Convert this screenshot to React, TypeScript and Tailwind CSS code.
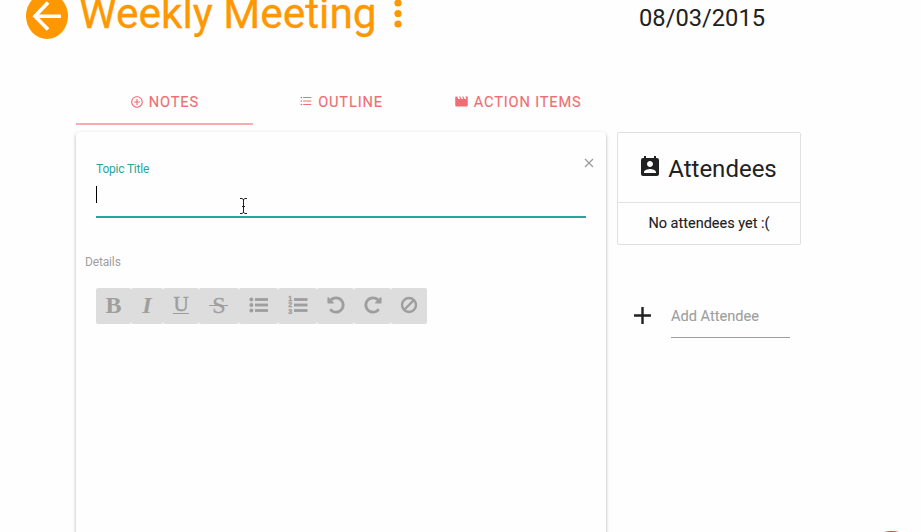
import React from "react";
import {
  MdAdd,
  MdControlPoint,
  MdFormatListBulleted,
  MdMovie,
  MdPermContactCalendar,
} from "react-icons/md";

const UNDO =
  "M1664 896q0 156-61 298t-164 245-245 164-298 61q-172 0-327-72.5t-264-204.5q-7-10-6.5-22.5t8.5-20.5l137-138q10-9 25-9 16 2 23 12 73 95 179 147t225 52q104 0 198.5-40.5t163.5-109.5 109.5-163.5 40.5-198.5-40.5-198.5-109.5-163.5-163.5-109.5-198.5-40.5q-98 0-188 35.5t-160 101.5l137 138q31 30 14 69-17 40-59 40h-448q-26 0-45-19t-19-45v-448q0-42 40-59 39-17 69 14l130 129q107-101 244.5-156.5t284.5-55.5q156 0 298 61t245 164 164 245 61 298z";

function Rotate({ flip = false }: { flip?: boolean }) {
  return (
    <svg viewBox="0 0 1792 1792" className={flip ? "size-5 -scale-x-100" : "size-5"} fill="currentColor">
      <path d={UNDO} />
    </svg>
  );
}

function BulletList() {
  return (
    <svg width="20" height="16" viewBox="0 0 20 16" fill="currentColor">
      {[2.5, 8, 13.5].map((y) => (
        <g key={y}>
          <circle cx="2.4" cy={y} r="2" />
          <rect x="6" y={y - 1.4} width="13" height="2.8" />
        </g>
      ))}
    </svg>
  );
}

function NumberList() {
  return (
    <svg width="20" height="20" viewBox="0 0 20 20" fill="currentColor" className="overflow-visible">
      {[4.5, 10, 15.5].map((y, i) => (
        <g key={y}>
          <text x="0.3" y={[5.8, 12.4, 19][i]} fontSize="7" fontWeight="700" stroke="currentColor" strokeWidth="0.3" fontFamily="Liberation Sans, sans-serif">
            {i + 1}
          </text>
          <rect x="6" y={y - 1.4} width="13.5" height="2.8" />
        </g>
      ))}
    </svg>
  );
}

function Ban() {
  return (
    <svg width="18" height="18" viewBox="0 0 18 18" fill="none" stroke="currentColor" strokeWidth="2.4">
      <circle cx="9" cy="9" r="7" />
      <path d="M4 14 14 4" />
    </svg>
  );
}

const letter = "font-['Liberation_Serif',serif] text-[24px] leading-none";

const tools = [
  { id: "bold", width: "w-[35px]", icon: <span className={letter + " font-bold"}>B</span> },
  { id: "italic", width: "w-[32px]", icon: <span className={letter + " font-bold italic"}>I</span> },
  {
    id: "underline",
    width: "w-[36px]",
    icon: <span className="h-[18px] w-4 border-b border-current text-center font-['Liberation_Serif',serif] text-[21px] leading-[17px] [-webkit-text-stroke:0.5px]">U</span>,
  },
  {
    id: "strike",
    width: "w-[40px]",
    icon: (
      <span className="relative font-['Liberation_Serif',serif] text-[24px] leading-none [-webkit-text-stroke:0.3px]">
        S<span className="absolute top-[12px] -left-[3px] h-px w-[19px] bg-current" />
      </span>
    ),
  },
  { id: "bullets", width: "w-[39px]", icon: <BulletList /> },
  { id: "numbers", width: "w-[39px]", icon: <NumberList /> },
  { id: "undo", width: "w-[37px]", icon: <Rotate /> },
  { id: "redo", width: "w-[37px]", icon: <Rotate flip /> },
  { id: "clear", width: "w-[36px]", icon: <Ban /> },
];

const tabs = [
  { label: "NOTES", icon: <MdControlPoint className="mb-px size-[14px]" />, active: true },
  { label: "OUTLINE", icon: <MdFormatListBulleted className="mb-[2px] size-[14px]" />, active: false },
  { label: "ACTION ITEMS", icon: <MdMovie className="mb-[2px] size-[15px]" />, active: false },
];

function Header() {
  return (
    <header className="flex h-[84px] items-start pl-[26px]">
      <svg width="42" height="40" viewBox="0 0 42 40" className="shrink-0">
        <ellipse cx="21" cy="16" rx="21" ry="23" fill="#ff9800" />
        <path d="M35 16.2H9.5M22 2.5 9 16.2 22 29.5" fill="none" stroke="#fff" strokeWidth="3.6" />
      </svg>
      <h1 className="-mt-[12px] ml-[11px] w-[315px] text-[42.4px] leading-[51px] whitespace-nowrap text-[#ff9800] [-webkit-text-stroke:0.3px]">
        Weekly Meeting
      </h1>
      <svg width="8" height="30" viewBox="0 0 8 30" fill="#ff9800" className="shrink-0">
        <circle cx="4" cy="3" r="3.6" />
        <circle cx="4" cy="13.5" r="3.6" />
        <circle cx="4" cy="24" r="3.6" />
      </svg>
      <time className="mt-[3px] ml-[237px] text-[23.7px] leading-[31px]">08/03/2015</time>
    </header>
  );
}

export default function App() {
  return (
    <div className="relative h-[532px] w-[921px] overflow-hidden bg-[#fefefe] font-['Roboto',sans-serif] text-[#212121]">
      <Header />
      <div className="flex items-start pl-[76px]">
        <main className="w-[530px]">
          <nav className="flex h-[41px] text-[#ee6e73]">
            {tabs.map((t) => (
              <div
                key={t.label}
                className={
                  "flex w-[177px] items-center justify-center gap-[5px] border-b-2 pb-[3px] text-[14.6px] tracking-[0.85px] [-webkit-text-stroke:0.15px] " +
                  (t.active ? "border-[#f9abaf]" : "border-transparent")
                }
              >
                {t.icon}
                <span className="pt-px">{t.label}</span>
              </div>
            ))}
          </nav>
          <section className="mt-[7px] h-[450px] rounded-sm shadow-[0_2px_3px_0_rgba(0,0,0,0.2),0_1px_4px_0_rgba(0,0,0,0.14)]">
            <div className="flex justify-between pt-[24px] pr-[12px] pl-5">
              <div className="pt-[5px] text-[12px] leading-4 tracking-[-0.2px] text-[#26a69a]">Topic Title</div>
              <svg width="11" height="15" viewBox="0 0 11 15" stroke="#999" strokeWidth="1.2">
                <path d="m2 3 8 8m0-8-8 8" />
              </svg>
            </div>
            <div className="mx-5 flex h-[41px] items-start border-b-2 border-[#26a69a] pt-[8px]">
              <span className="mt-px h-[17px] w-px bg-black" />
              <svg width="9" height="16" viewBox="0 0 9 16" className="mt-[13px] ml-[142px]" fill="none" stroke="#222">
                <path d="M1 .5h2l1.5 1L6 .5h2M4.5 1v14M1 15.5h2l1.5-1 1.5 1h2M3 8.5h3" />
              </svg>
            </div>
            <div className="mt-[36px] pl-[9px] text-[12px] leading-4 tracking-[-0.15px] text-[#9e9e9e]">Details</div>
            <div className="mt-[18px] ml-5 flex h-9 w-[331px] text-[#9e9e9e]">
              {tools.map((t) => (
                <button key={t.id} className={"flex h-9 shrink-0 items-center justify-center rounded-[2px] bg-[#ddd] pb-[2px] " + t.width}>
                  {t.icon}
                </button>
              ))}
            </div>
          </section>
        </main>
        <aside className="mt-[48px] ml-[11px] w-[184px]">
          <div className="rounded-[2px] border border-[#e0e0e0]">
            <div className="flex h-[70px] items-center justify-center gap-[6px] border-b border-[#e0e0e0]">
              <MdPermContactCalendar className="mb-[2px] size-6" />
              <h2 className="pt-[3px] pr-[3px] text-[24px]">Attendees</h2>
            </div>
            <p className="h-[41px] text-center text-[14.5px] leading-[41px] [-webkit-text-stroke:0.1px]">No attendees yet :(</p>
          </div>
          <div className="mt-[57px] flex pl-[11px]">
            <MdAdd className="-mt-px size-[29px]" />
            <div className="ml-[14px] h-[36px] w-[119px] border-b border-[#9e9e9e] text-[14.6px] leading-[28px] text-[#9e9e9e] [-webkit-text-stroke:0.1px]">
              Add Attendee
            </div>
          </div>
        </aside>
      </div>
      <div className="absolute top-[531px] left-[864px] size-[55px] rounded-full bg-[#e53935]" />
    </div>
  );
}
